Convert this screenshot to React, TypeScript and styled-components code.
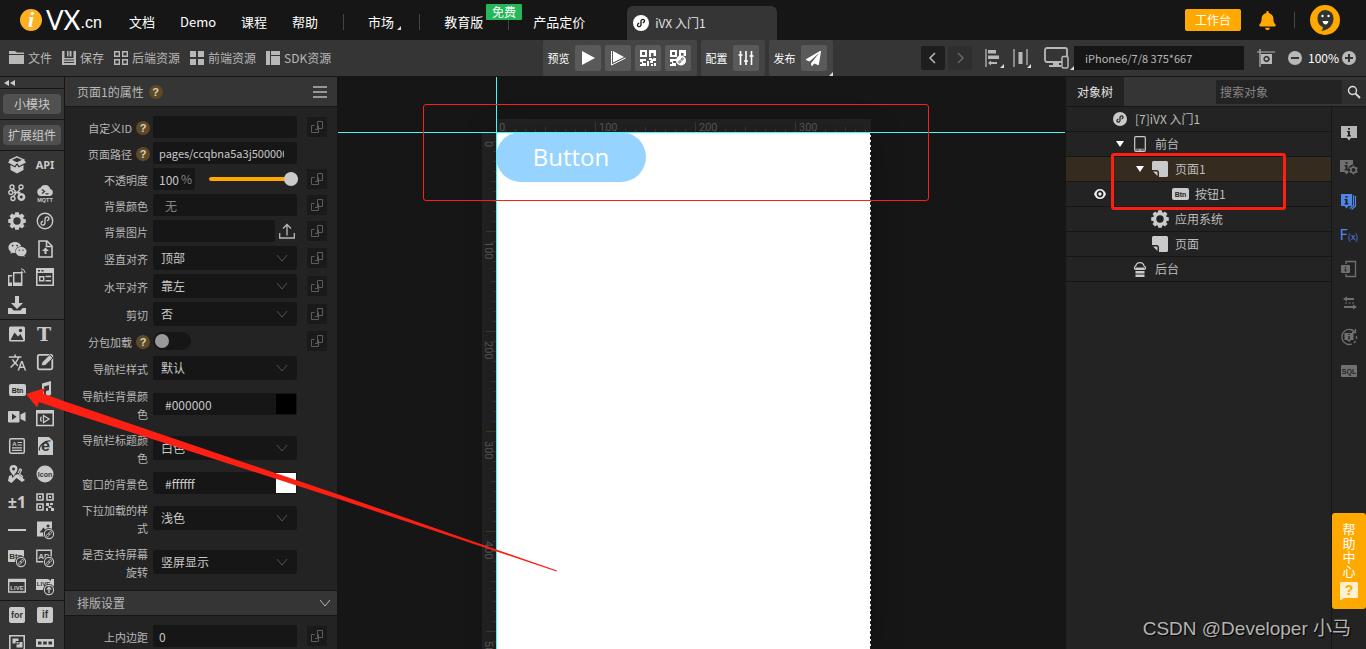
import React from "react";
import styled, { createGlobalStyle } from "styled-components";
import { FaBell, FaWeixin, FaPaperPlane } from "react-icons/fa";
import { MdTranslate } from "react-icons/md";

const color = {
  base: "#161616",
  panel: "#232323",
  bar: "#353535",
  text: "#b8b8b8",
  icon: "#cacaca",
  accent: "#ffa800",
  mark: "#fb2013",
  guide: "#45f6f6",
};

const GlobalStyle = createGlobalStyle`
  *, *::before, *::after { box-sizing: border-box; }
  body {
    margin: 0;
    background: ${color.base};
    color: ${color.text};
    font: 12px/18px "Noto Sans CJK SC", sans-serif;
  }
  button, input, select { font: inherit; color: inherit; border: 0; margin: 0; padding: 0; background: none; outline: 0; }
  button { cursor: pointer; }
  a { color: inherit; text-decoration: none; }
  svg { display: block; flex: none; overflow: visible; }
`;

/* ---------- icons ---------- */

const Svg = ({ size = 18, h, children }: { size?: number; h?: number; children: React.ReactNode }) => (
  <svg width={size} height={h ?? size} viewBox={`0 0 ${size} ${h ?? size}`} fill="currentColor" aria-hidden="true">
    {children}
  </svg>
);

const line = (width = 1.5) => ({ fill: "none", stroke: "currentColor", strokeWidth: width });
const S_PATH =
  "M7 9.2C5.5 9.6 4.8 10.8 5.2 12c.5 1.3 2 1.4 3 .6.6-.5.8-1 .8-1.8V7.2c0-.8.2-1.3.8-1.8 1-.8 2.5-.7 3 .6.4 1.2-.3 2.4-1.8 2.8";

const IconText = ({ x, y, size, fill = "currentColor", serif, children }: {
  x: number; y: number; size: number; fill?: string; serif?: boolean; children: string;
}) => (
  <text
    x={x}
    y={y}
    fill={fill}
    fontSize={size}
    fontWeight="700"
    textAnchor="middle"
    fontFamily={serif ? '"DejaVu Serif", serif' : '"Liberation Sans", sans-serif'}
  >
    {children}
  </text>
);

const LinkBadge = ({ up }: { up?: boolean }) => (
  <g>
    <circle cx="13" cy="13" r="6" fill={color.bar} />
    <circle cx="13" cy="13" r="4.6" fill={color.bar} stroke="currentColor" strokeWidth="1.1" />
    {up ? (
      <path d="M13 16v-5.5M10.8 12.6 13 10.3l2.2 2.3" {...line(1.3)} />
    ) : (
      <g transform="rotate(-45 13 13)" {...line(0.9)}>
        <rect x="9.8" y="12" width="3.6" height="2" rx="1" />
        <rect x="12.6" y="12" width="3.6" height="2" rx="1" />
      </g>
    )}
  </g>
);

const GearIcon = () => (
  <Svg>
    <circle cx="9" cy="9" r="5.3" {...line(3.2)} />
    {[0, 45, 90, 135, 180, 225, 270, 315].map((a) => (
      <path key={a} d="M6.700 3.500 7.200.2h3.600l.5 3.300z" transform={`rotate(${a} 9 9)`} />
    ))}
  </Svg>
);
const BoxIcon = () => (
  <Svg>
    <path d="M9 .8 15.500 3.800 9 7 2.500 3.800z" {...line(1.300)} />
    <path d="M2.200 3.500 9 6.800 6.800 10 0 6.500zM15.800 3.500 9 6.800l2.200 3.200L18 6.500z" />
    <path d="M2.500 9l4.700 2.400L9 9l1.800 2.400L15.500 9v5L9 17.500 2.500 14z" />
  </Svg>
);
const MiniIcon = () => (
  <Svg>
    <circle cx="9" cy="9" r="7.7" {...line(1.4)} />
    <path d={S_PATH} {...line(1.4)} />
  </Svg>
);
const MiniBadge = ({ size, fg, bg }: { size: number; fg: string; bg: string }) => (
  <svg width={size} height={size} viewBox="0 0 18 18" aria-hidden="true">
    <circle cx="9" cy="9" r="9" fill={bg} />
    <path d={S_PATH} fill="none" stroke={fg} strokeWidth="1.6" />
  </svg>
);
const BtnIcon = () => (
  <Svg size={18}>
    <rect x="1" y="3" width="17" height="12" rx="2" />
    <IconText x={9.5} y={11.5} size={7} fill="#232323">Btn</IconText>
  </Svg>
);
const NodesIcon = () => (
  <Svg>
    <path d="M5 4.500 8 8M13 4.500 9.500 8M5 13l3-4M5.500 8.500h7M10 9l2.500 2.500" {...line(1.3)} />
    {[[4, 3], [13, 3], [2.8, 8.5], [5, 14.5]].map(([x, y]) => (
      <circle key={`${x}${y}`} cx={x} cy={y} r="2" {...line(1.4)} />
    ))}
    <path fillRule="evenodd" d="M13.300 9a4 4 0 1 0 .1 0zm0 2.500a1.500 1.500 0 1 1-.1 0z" />
  </Svg>
);
const MqttIcon = () => (
  <Svg>
    <path d="M5 12a4 4 0 0 1-.6-7.900A5.200 5.200 0 0 1 14.200 5 3.600 3.600 0 0 1 14 12z" />
    <path d="m6 5.500 2.500 2L6 9.500M9.500 9.800h3" fill="none" stroke={color.bar} strokeWidth="1.3" />
    <IconText x={9} y={17.5} size={5.5}>MQTT</IconText>
  </Svg>
);
const FileUpIcon = () => (
  <Svg>
    <path d="M3 1h8l5 5v11H3zM10.500 1v5.500H16" {...line(1.6)} />
    <path d="m9.500 7.500 3.500 3.500h-2.500v3h-2v-3H6z" />
  </Svg>
);
const PhonesIcon = () => (
  <Svg>
    <path d="M5.700 4.700h8v12.600h-8z" {...line(1.5)} />
    <path d="M5 14.500h9V18H5zM0 14.500h4V18H0z" />
    <path d="M4 7.700H.700V17" {...line(1.4)} />
    <path d="M13 3a2.500 2.500 0 0 1 2 2M13 .7A5 5 0 0 1 17.300 5" {...line(1)} />
  </Svg>
);
const WindowIcon = () => (
  <Svg>
    <path d="M.8.8h16.400v16.400H.8z" {...line(1.6)} />
    <path d="M0 0h18v5H0z" />
    <path d="M2 2h2v1.500H2zM5.500 2h2v1.500h-2z" fill={color.bar} />
    <path d="M3.700 8.700h4v4h-4zM9.500 8.500H15M9.500 12.700H15" {...line(1.4)} />
  </Svg>
);
const DownloadIcon = () => (
  <Svg><path d="M7 0h4v7h4l-6 6-6-6h4zM0 12h3.500l2 2.500h7l2-2.500H18v6H0z" /></Svg>
);
const ImageIcon = () => (
  <Svg>
    <rect x="1" y="1.500" width="16" height="15" rx="1.500" />
    <circle cx="12.500" cy="5.500" r="1.700" fill={color.bar} />
    <path d="m2.500 15 4-7.500 3.500 4L12.500 9l3 6z" fill={color.bar} />
  </Svg>
);
const EditIcon = () => (
  <Svg>
    <rect x="1.800" y="1.800" width="14.500" height="14.500" rx="1.500" {...line(1.8)} />
    <path d="m5 13 1-3.800 7.500-7.500L17 5l-7.800 7.500z" stroke={color.bar} strokeWidth="1" />
  </Svg>
);
const MusicIcon = () => (
  <Svg>
    <path d="M6 2.500 15 0v12h-2V4L8 5.500V14H6z" />
    <circle cx="5.500" cy="14" r="2.700" /><circle cx="12.500" cy="12" r="2.700" />
  </Svg>
);
const VideoIcon = () => (
  <Svg>
    <rect y="2" width="11.500" height="11.500" rx="1" />
    <path d="m4 4.500 4.500 3.300L4 11z" fill={color.bar} />
    <path d="m17.500 3-5 2.500V10l5 2.500z" />
  </Svg>
);
const PlayWindowIcon = () => (
  <Svg>
    <path d="M.8 2h16.400v14.500H.8z" {...line(1.6)} />
    <path d="M0 1h18v3.500H0z" />
    <path d="M7.500 6.500 13 10l-5.500 3.500z" {...line(1.3)} />
    <path d="M5.500 12.500a4 4 0 0 1 0-5" {...line(1.2)} />
  </Svg>
);
const ArticleIcon = () => (
  <Svg>
    <rect x="1.700" y="1.700" width="14.600" height="14.600" rx="1.500" {...line(1.5)} />
    <path d="M9.500 5.500H14M9.500 8H14M4 10.800h10M4 13.300h10" {...line(1.2)} />
    <IconText x={6.3} y={9} size={6}>A</IconText>
  </Svg>
);
const BrowserIcon = () => (
  <Svg>
    <path d="M2 0h11l4 4v14H2z" />
    <IconText x={9.5} y={14} size={16} fill={color.bar}>e</IconText>
    <path d="M3.500 13.500C2.500 9 8 3.500 14.500 4" fill="none" stroke={color.bar} strokeWidth="1.200" />
  </Svg>
);
const MapIcon = () => (
  <Svg>
    <path fillRule="evenodd" d="M5.500 0a4 4 0 0 1 4 4c0 2.500-2.500 4.500-4 7-1.500-2.500-4-4.500-4-7a4 4 0 0 1 4-4zm0 2.400a1.500 1.500 0 1 0 .1 0z" />
    <path d="m1 11 2.500-1 1 3 2.500-3 3-1 7 6-3 2-5.500-4L3.500 18 0 16z" />
    <path d="m10 8 2-4 1.500 1-2 4 3 2.500-1 2" {...line(1.2)} />
  </Svg>
);
const IconCircle = () => (
  <Svg>
    <circle cx="9" cy="9" r="8.500" />
    <IconText x={9} y={11.5} size={7} fill={color.bar}>Icon</IconText>
  </Svg>
);
const QrIcon = () => (
  <Svg>
    <path d="M1 1h6v6H1zM11 1h6v6h-6zM1 11h6v6H1z" {...line(1.6)} />
    <path d="M3 3h2v2H3zM13 3h2v2h-2zM3 13h2v2H3zM10 10h3v3h-3zM14 10h3v2h-3zM12.500 13h3v2h-3zM10 15h2v3h-2zM15 15h3v3h-3z" />
  </Svg>
);
const DashIcon = () => <Svg><path d="M0 8h18v2H0z" /></Svg>;
const ImageLinkIcon = () => (
  <Svg>
    <path fillRule="evenodd" d="M1 .5h15v15H1zm2.500 11h8L7.500 6.500zM12 3.500a1.500 1.500 0 1 0 .1 0z" />
    <LinkBadge />
  </Svg>
);
const BtnLinkIcon = () => (
  <Svg>
    <rect y="1" width="16" height="12" rx="1" />
    <IconText x={8} y={9.5} size={8} fill={color.bar}>Btn</IconText>
    <LinkBadge />
  </Svg>
);
const AdLinkIcon = () => (
  <Svg>
    <path d="M.8 1.300h14.400v11.400H.8z" {...line(1.4)} />
    <IconText x={8} y={9.5} size={8}>AD</IconText>
    <LinkBadge />
  </Svg>
);
const LiveIcon = () => (
  <Svg>
    <path d="M.7 2.500h16.600V15H.7z" {...line(1.4)} />
    <path d="M0 2h18v3H0z" />
    <IconText x={9} y={12.5} size={6}>LIVE</IconText>
  </Svg>
);
const LiveUpIcon = () => (
  <Svg>
    <path d="M0 2h12l3 2V2h3v11H0z" />
    <IconText x={7.5} y={9} size={6} fill={color.bar}>LIVE</IconText>
    <LinkBadge up />
  </Svg>
);
const WordIcon = ({ word }: { word: string }) => (
  <Svg>
    <rect x="1" y="1" width="16" height="16" rx="2" />
    <IconText x={9} y={12} size={word === "if" ? 10 : 9} fill={color.bar}>{word}</IconText>
  </Svg>
);
const GroupIcon = () => (
  <Svg>
    <path d="M1.800 1.800h14.400v15H1.800z" {...line(1.6)} />
    <path d="M4 4h7v6H4zM8 7.500h7V14H8z" stroke={color.bar} strokeWidth="1" />
  </Svg>
);
const CellsIcon = () => (
  <Svg><path d="M0 5h18v8H0z" /><path d="M2 7.500h3.500v3H2zM7.200 7.500h3.500v3H7.200zM12.500 7.500H16v3h-3.500z" fill={color.bar} /></Svg>
);
const LetterT = () => <Svg><IconText x={8} y={15.5} size={19} serif>T</IconText></Svg>;

const FolderIcon = () => <Svg size={15} h={14}><path d="M0 0h6l2 1.500h7V3H0zM0 4h15v9H0z" /></Svg>;
const SaveIcon = () => <Svg size={14}><path d="M0 0h2.500v7h9V0H14v14H0zM5 0h1.500v5.500H5zM7.500 0h2v5.500h-2z" /><path d="M2 9h10M2 11.500h10" stroke={color.bar} /></Svg>;
const GridOutline = () => <Svg size={14}><path d="M.7.700h4.600v4.600H.7zM8.700.700h4.600v4.600H8.700zM.7 8.700h4.600v4.600H.7zM8.700 8.700h4.600v4.600H8.700z" {...line(1.4)} /></Svg>;
const GridSolid = () => <Svg size={14}><path d="M0 0h6v6H0zM8 0h6v6H8zM0 8h6v6H0zM8 8h6v6H8z" /></Svg>;
const SdkIcon = () => <Svg size={14}><path d="M0 0h4v14H0zM5 0h9v4H5zM5 5h9v9H5z" /></Svg>;
const PlayIcon = () => <Svg size={16}><path d="m2 1 13 7-13 7z" /></Svg>;
const PlayStackIcon = () => <Svg size={16}><path d="m3 1 11 6L3 12.500z" /><path d="M1.500 1v14l14-7" {...line(1)} /></Svg>;
const QrPreview = ({ mini }: { mini?: boolean }) => (
  <Svg size={16}>
    <path d="M1 1h5v5H1z" {...line(2)} />
    <path d="M9 0h7v6h-2.500V3H11v4H9zM0 9h6v2H3v2h3v3H0v-2h2v-2H0z" />
    {mini ? (
      <>
        <circle cx="11" cy="10.500" r="5" />
        <path d="M10 10.500c-2 1-1.500 3 0 2.300 1.200-.6.700-1.600 1-2.300s-.2-1.700 1-2.300c1.500-.7 2 1.300 0 2.300" fill="none" stroke="#555" />
      </>
    ) : (
      <path d="M9 8h3v2H9zM14 8h2v3h-3v2h-3v-2M7 11h2v5H7zM11 14h2v2h-2zM14 13h2v3h-2z" />
    )}
  </Svg>
);
const SlidersIcon = () => (
  <Svg size={16}><path d="M2.500 1v14M8 1v14M13.500 1v14M.5 5h4M6 11h4M11.500 6h4" {...line(1.6)} /></Svg>
);
const AlignIcon = () => (
  <Svg size={18}>
    <path d="M1 0v18" {...line(1.3)} />
    <path d="M3 1h8v3.500H3zM3 6.500h11V10H3zM3 14l3-2.500V13h6v2H6v1.500z" />
  </Svg>
);
const SpreadIcon = () => <Svg size={16} h={18}><path d="M1 0v18M14 0v16" {...line(1.3)} /><path d="M5.500 3h4v12h-4z" /></Svg>;
const DevicesIcon = () => (
  <Svg size={25} h={22}>
    <rect x="1" y="1" width="22" height="14" rx="2" {...line(1.8)} />
    <path d="M9 15h6v3H9zM5 18h12v2H5z" />
    <rect x="18" y="9.500" width="6" height="11.500" rx="1.500" fill={color.bar} stroke="currentColor" strokeWidth="1.5" />
  </Svg>
);
const CaptureIcon = () => (
  <Svg size={18}>
    <path d="M0 3h18M3 0v18" {...line(1.2)} />
    <path fillRule="evenodd" d="M4 5h11v10H4zm5.500 1.800a3.200 3.200 0 1 0 .1 0zm0 1.700a1.500 1.500 0 1 1-.1 0z" />
  </Svg>
);
const ZoomIcon = ({ plus }: { plus?: boolean }) => (
  <Svg size={14}>
    <circle cx="7" cy="7" r="7" />
    <path d={plus ? "M3 7h8M7 3v8" : "M3 7h8"} stroke={color.bar} strokeWidth="2" />
  </Svg>
);
const Chevron = ({ d }: { d: "left" | "right" | "down" }) => {
  const path = { left: "M8 1 3 6l5 5", right: "M4 1l5 5-5 5", down: "M1 3l5 6 5-6" }[d];
  return <Svg size={12}><path d={path} {...line(d === "down" ? 1 : 1.5)} /></Svg>;
};
const CopyIcon = () => (
  <Svg size={14}><path d="M4.500 5.500h-3v7h7v-7M8.500 8.500h4v-7h-5v8H5" {...line(1)} /></Svg>
);
const UploadIcon = () => <Svg size={16}><path d="M.7 10v5h14.600v-5M8 12.500V1.500M4 5.500l4-4 4 4" {...line(1.3)} /></Svg>;
const MenuIcon = () => <Svg size={14} h={12}><path d="M0 1h14M0 6h14M0 11h14" {...line(1.3)} /></Svg>;
const SearchIcon = () => <Svg size={14}><circle cx="5.500" cy="5.500" r="4" {...line(1.4)} /><path d="m8.500 8.500 4.500 4.500" {...line(1.8)} /></Svg>;
const PhoneIcon = () => <Svg size={14} h={16}><rect x="1.700" y=".7" width="10.600" height="14.600" rx="1" {...line(1.2)} /><path d="M2 12.500h10V15H2z" fill="#777" /><path d="M6 13.500h2v1H6z" /></Svg>;
const PageIcon = () => <Svg size={16}><path d="M0 1.500Q0 0 1.500 0h13Q16 0 16 1.500v13q0 1.500-1.500 1.500H7V11.500Q7 9 4.500 9H0z" /><path d="M1 10.500h3.500q1 0 1 1V15z" /></Svg>;
const ServerIcon = () => (
  <Svg size={14} h={15}>
    <path d="M3 7.500H2.500A1.900 1.900 0 0 1 2.700 4a4.300 4.300 0 0 1 8.400 0 1.900 1.900 0 0 1 .4 3.500H11" {...line(1.2)} />
    <path d="M2.500 5.500h9v2.500h-9zM2.500 9h9v2.500h-9zM2.500 12.500h9V15h-9z" />
  </Svg>
);
const EyeIcon = () => (
  <Svg size={12} h={10}><path fillRule="evenodd" d="M6 0c3 0 5 2 6 5-1 3-3 5-6 5S1 8 0 5c1-3 3-5 6-5zm0 1.600a3.400 3.400 0 1 0 .1 0zm0 1.700a1.700 1.700 0 1 1-.1 0z" /></Svg>
);
const Bubble = ({ x = 1, w = 16 }: { x?: number; w?: number }) => (
  <>
    <path d={`M${x} 2h${w}v12h-${w / 2 - 2}l-2 2.500-2-2.500h-${w / 2 - 2}z`} />
    <path
      d="M-1 4h2v1.800h-2zM-2 7h3v4.200h1v1.300h-4v-1.300h1V8.300h-1z"
      transform={`translate(${x + w / 2} 0)`}
      fill={color.panel}
    />
  </>
);
const InfoGear = () => (
  <Svg>
    <Bubble x={0} w={13} />
    <circle cx="13.500" cy="12" r="5.500" fill={color.panel} />
    <circle cx="13.500" cy="12" r="2.700" {...line(1.6)} />
    {[0, 60, 120, 180, 240, 300].map((a) => <path key={a} d="M12.700 7.500h1.600v2h-1.600z" transform={`rotate(${a} 13.500 12)`} />)}
  </Svg>
);
const InfoStack = () => (
  <Svg><Bubble x={1} w={11} /><path d="M13.500 3v10.500l-4 3M15.500 4v10l-4 3.500" {...line(1.2)} /></Svg>
);
const InfoDoor = () => <Svg><path d="M6 4V1.500h9.500v15H6V14" {...line(1.3)} /><rect x="1" y="5" width="9" height="8" rx="1" /><path d="M5.500 6.500v1M5.500 8.500v3" stroke={color.panel} strokeWidth="1.500" /></Svg>;
const SwapIcon = () => <Svg><path d="M5 4h9v2H7v1.500L3 5l4-2.500V4zM13 10.500l4 2.500-4 2.500V14H4v-2h9zM5 8.500h2v1H5zM8.500 8.500h2v1h-2zM12 8.500h2v1h-2z" /></Svg>;
const InfoCycle = () => (
  <Svg>
    <path d="M14.500 3.500A7.500 7.500 0 1 0 12 16M16.500 8v3M15.500 13l-1.500 2M12 4.500h3.500V1" {...line(1.3)} />
    <path d="M4.500 5h9v7h-2.500L9 14l-2-2H4.500z" /><path d="M9 6v1M9 8v3.500" stroke={color.panel} strokeWidth="1.500" />
  </Svg>
);
const SqlIcon = () => <Svg><rect x="1" y="3" width="16" height="12" rx="1" /><IconText x={9} y={11.8} size={7} fill={color.panel}>SQL</IconText></Svg>;
const ChatHelp = () => (
  <Svg size={18} h={19}>
    <path d="M0 1.500Q0 0 1.500 0h15Q18 0 18 1.500v13q0 1.500-1.500 1.500H4l-4 2.500z" fill="#fff0cf" />
    <IconText x={9} y={13} size={14} fill={color.accent}>?</IconText>
  </Svg>
);

/* ---------- top navigation ---------- */

const Shell = styled.div`
  position: relative;
  height: 100vh;
  display: flex;
  flex-direction: column;
  overflow: hidden;
`;
const TopBar = styled.header`
  flex: none;
  height: 40px;
  display: flex;
  align-items: center;
  padding: 0 26px 0 20px;
  color: #fff;
`;
const Logo = styled.a`
  display: flex;
  align-items: center;
  width: 109px;
`;
const LogoMain = styled.span`
  margin-left: 4px;
  font: 400 26px/26px Lato, sans-serif;
`;
const LogoDomain = styled.span`
  padding-top: 5px;
  font: 16px/20px "Liberation Sans", sans-serif;
`;
const Menu = styled.nav`
  display: flex;
  align-items: center;
  gap: 25px;
  height: 40px;
  padding-top: 3px;
  font-size: 13px;
`;
const MenuLink = styled.a`
  position: relative;
  white-space: nowrap;
`;
const Corner = styled.span<{ $right: number; $bottom: number }>`
  position: absolute;
  right: ${(p) => p.$right}px;
  bottom: ${(p) => p.$bottom}px;
  border: 2px solid transparent;
  border-right-color: #ddd;
  border-bottom-color: #ddd;
`;
const Divider = styled.span`
  flex: none;
  width: 1px;
  height: 16px;
  margin-right: -1px;
  background: #444;
`;
const FreeBadge = styled.span`
  position: absolute;
  left: 42px;
  bottom: 11px;
  z-index: 1;
  width: 36px;
  border-radius: 1px;
  background: #27b65a;
  font-size: 12px;
  line-height: 16px;
  text-align: center;
`;
const ProjectTab = styled.a`
  align-self: flex-end;
  display: flex;
  align-items: center;
  gap: 6px;
  width: 150px;
  height: 34px;
  margin-left: 42px;
  padding-left: 6px;
  border-radius: 6px 6px 0 0;
  background: ${color.bar};
  color: #e4e4e4;
`;
const Account = styled.div`
  display: flex;
  align-items: center;
  margin-left: auto;
`;
const WorkspaceButton = styled.button`
  width: 56px;
  height: 22px;
  border-radius: 2px;
  background: ${color.accent};
  color: #fff;
`;
const BellButton = styled.button`
  margin: 0 17px;
  color: ${color.accent};
`;
const Avatar = styled.a`
  margin-left: 16px;
`;

/* ---------- toolbar ---------- */

const Toolbar = styled.div`
  flex: none;
  display: grid;
  grid-template-columns: 1fr auto 1fr;
  align-items: center;
  height: 36px;
  padding-left: 9px;
  background: ${color.bar};
`;
const ToolSection = styled.div<{ $end?: boolean }>`
  display: flex;
  align-items: center;
  justify-content: ${(p) => (p.$end ? "flex-end" : "flex-start")};
  gap: ${(p) => (p.$end ? 0 : 10)}px;
  padding-right: ${(p) => (p.$end ? 10 : 0)}px;
`;
const FileButton = styled.button`
  display: flex;
  align-items: center;
  gap: 4px;
  white-space: nowrap;
`;
const Groups = styled.div`
  display: flex;
  gap: 4px;
`;
const Group = styled.div`
  position: relative;
  display: flex;
  align-items: center;
  gap: 4px;
  height: 36px;
  padding: 0 6px 0 5px;
  border-radius: 2px;
  background: #444;
  color: #fff;
  font-size: 11px;
`;
const GroupName = styled.span`
  margin-right: 1px;
`;
const GroupButton = styled.button`
  display: grid;
  place-items: center;
  width: 26px;
  height: 26px;
  border-radius: 2px;
  background: #5a5a5a;
  color: #fff;
`;
const StepButton = styled.button`
  display: grid;
  place-items: center;
  width: 24px;
  height: 24px;
  margin-right: 3px;
  border-radius: 2px;
  background: #1e1e1e;
  color: #bbb;
  &:disabled { background: #2e2e2e; color: #666; }
`;
const FlatButton = styled.button<{ $left?: number }>`
  position: relative;
  margin-left: ${(p) => p.$left ?? 0}px;
`;
const DeviceSelect = styled.select`
  appearance: none;
  width: 170px;
  height: 24px;
  margin: 0 13px 0 5px;
  padding-left: 11px;
  background: ${color.base};
  font-size: 11px;
`;
const ZoomValue = styled.output`
  width: 28px;
  margin: 0 6px;
  color: #fff;
  white-space: nowrap;
`;

/* ---------- workspace ---------- */

const Workspace = styled.main`
  flex: 1;
  min-height: 0;
  display: grid;
  grid-template-columns: 64px 272px minmax(0, 1fr) 300px;
  gap: 1px;
  padding-top: 1px;
`;

const Rail = styled.aside`
  overflow: hidden;
  background: ${color.bar};
  color: ${color.icon};
`;
const RailBlock = styled.div`
  height: 31px;
  padding: 5px 3px;
  border-bottom: 1px solid ${color.base};
`;
const CollapseButton = styled.button`
  display: flex;
  align-items: center;
  width: 100%;
  height: 12px;
  padding-left: 4px;
  border-bottom: 1px solid ${color.base};
`;
const ModuleButton = styled.button`
  width: 58px;
  height: 20px;
  border-radius: 4px;
  background: #505050;
  white-space: nowrap;
`;
const WidgetGrid = styled.div`
  display: grid;
  grid-template-columns: 28px 28px;
  grid-auto-rows: 28px;
  padding: 0 3px;
  border-bottom: 1px solid ${color.base};
`;
const WidgetButton = styled.button`
  display: grid;
  place-items: center;
  font: 700 11px/18px "Noto Sans", sans-serif;
`;
const WidgetSign = styled.span`
  font-size: 16px;
`;

/* ---------- properties ---------- */

const Properties = styled.section`
  overflow: hidden;
  background: ${color.panel};
`;
const PanelHeader = styled.header<{ $height: number }>`
  display: flex;
  align-items: center;
  gap: 5px;
  height: ${(p) => p.$height}px;
  padding: 0 6px 0 12px;
  background: ${color.bar};
  box-shadow: 0 1px ${color.base}, 0 -1px ${color.base};
`;
const HeaderButton = styled.button<{ $right: number }>`
  margin: 0 ${(p) => p.$right}px 0 auto;
`;
const Help = styled.button`
  flex: none;
  width: 14px;
  height: 14px;
  border-radius: 50%;
  background: #5e4a25;
  color: #d8d0c0;
  font: 700 11px/14px "Liberation Sans", sans-serif;
`;
const Rows = styled.div`
  display: flex;
  flex-direction: column;
  gap: 4px;
  padding: 10px 10px 9px 0;
`;
const Row = styled.div<{ $height: number }>`
  display: grid;
  grid-template-columns: 88px 144px 20px;
  justify-content: start;
  align-items: center;
  height: ${(p) => p.$height}px;
`;
const RowLabel = styled.div<{ $help?: boolean }>`
  display: flex;
  align-items: center;
  justify-content: flex-end;
  gap: 4px;
  padding: 1px ${(p) => (p.$help ? 3 : 5)}px 0 14px;
  font-size: 11px;
  text-align: right;
`;
const Control = styled.div`
  display: flex;
  align-items: center;
`;
const Field = styled.div<{ $width: number; $pad?: number }>`
  display: flex;
  align-items: center;
  width: ${(p) => p.$width}px;
  height: 22px;
  padding: 0 1px 0 ${(p) => p.$pad ?? 6}px;
  border-radius: 2px;
  background: ${color.base};
`;
const TextInput = styled.input<{ $long?: boolean }>`
  flex: 1;
  min-width: 0;
  height: 22px;
  margin-right: ${(p) => (p.$long ? 12 : 0)}px;
  color: #c8c8c8;
  font-size: ${(p) => (p.$long ? 11 : 12)}px;
  &::placeholder { color: #858585; opacity: 1; }
`;
const Unit = styled.span`
  padding-right: 2px;
  color: #858585;
`;
const Swatch = styled.input`
  appearance: none;
  width: 20px;
  height: 20px;
  &::-webkit-color-swatch-wrapper { padding: 0; }
  &::-webkit-color-swatch { border: 0; }
`;
const SelectBox = styled.div`
  position: relative;
  width: 144px;
  height: 24px;
  color: #555;
`;
const Select = styled.select`
  appearance: none;
  width: 100%;
  height: 24px;
  padding-left: 8px;
  border-radius: 2px;
  background: ${color.base};
  color: #c8c8c8;
`;
const SelectArrow = styled.span`
  position: absolute;
  right: 9px;
  top: 6px;
  pointer-events: none;
`;
const Range = styled.input`
  appearance: none;
  width: 89px;
  height: 14px;
  margin-left: 14px;
  &::-webkit-slider-runnable-track { height: 4px; border-radius: 2px; background: ${color.accent}; }
  &::-webkit-slider-thumb { appearance: none; width: 14px; height: 14px; margin-top: -5px; border-radius: 50%; background: #cacaca; }
`;
const Switch = styled.input`
  appearance: none;
  display: flex;
  align-items: center;
  width: 38px;
  height: 18px;
  padding-left: 2px;
  border-radius: 9px;
  background: ${color.base};
  &::before { content: ""; width: 14px; height: 14px; border-radius: 50%; background: #999; }
`;
const UploadButton = styled.button`
  margin-left: 4px;
`;
const BindButton = styled.button`
  display: grid;
  place-items: center;
  width: 20px;
  height: 20px;
  margin-left: 10px;
  background: #1a1a1a;
  color: #5c5c5c;
`;

/* ---------- canvas ---------- */

const Canvas = styled.section`
  position: relative;
  overflow: hidden;
  padding: 42px 0 0 144px;
  display: grid;
  grid-template-columns: 14px 375px;
  grid-template-rows: 13px minmax(0, 1fr);
`;
const RulerX = styled.div`
  grid-column: 2;
  background: ${color.panel};
`;
const RulerY = styled.div`
  background: ${color.panel};
`;
const Artboard = styled.div`
  background: #fff;
  border-right: 1px dashed #222;
  box-shadow: 0 0 30px #0004;
`;
const SampleButton = styled.button`
  display: block;
  width: 150px;
  height: 50px;
  border-radius: 25px;
  background: #97d3ff;
  color: #fff;
  font: 24px/50px "Open Sans", sans-serif;
`;
const GuideX = styled.i`
  position: absolute;
  top: 55px;
  left: -1px;
  right: 0;
  height: 1px;
  background: ${color.guide};
`;
const GuideY = styled.i`
  position: absolute;
  left: 158px;
  top: 0;
  bottom: 0;
  width: 1px;
  background: ${color.guide};
`;
const Mark = styled.i<{ $x: number; $y: number; $w: number; $h: number; $line: number }>`
  position: absolute;
  left: ${(p) => p.$x}px;
  top: ${(p) => p.$y}px;
  width: ${(p) => p.$w}px;
  height: ${(p) => p.$h}px;
  border: ${(p) => p.$line}px solid ${color.mark};
  border-radius: 3px;
  pointer-events: none;
`;

const Ruler = ({ vertical }: { vertical?: boolean }) => {
  const length = vertical ? 600 : 375;
  const depth = vertical ? 14 : 13;
  const ticks = Array.from({ length: Math.floor(length / 10) }, (_, i) => (i + 1) * 10);
  return (
    <svg
      width={vertical ? depth : length}
      height={vertical ? length : depth}
      fontFamily="Roboto, sans-serif"
      fontSize="11"
      fill="#5a5a5a"
      aria-hidden="true"
    >
      {ticks.map((t) => {
        const size = t % 100 === 0 ? 10 : t % 50 === 0 ? 5 : 3;
        const fill = t % 100 === 0 ? "#46391f" : "#3a3a3a";
        return vertical ? (
          <rect key={t} x={depth - size} y={t - 1} width={size} height="1" fill={fill} />
        ) : (
          <rect key={t} x={t - 1} y={depth - size} width="1" height={size} fill={fill} />
        );
      })}
      {Array.from({ length: Math.ceil(length / 100) }, (_, i) => i * 100).map((n) =>
        vertical ? (
          <text key={n} transform={`translate(3 ${n + 9}) rotate(90)`}>{n}</text>
        ) : (
          <text key={n} x={n + 3} y="12">{n}</text>
        )
      )}
    </svg>
  );
};

/* ---------- object tree ---------- */

const ObjectPanel = styled.aside`
  display: flex;
  flex-direction: column;
  background: ${color.panel};
`;
const TreeHeader = styled.header`
  display: flex;
  align-items: center;
  height: 29px;
  background: ${color.bar};
`;
const TreeTab = styled.button`
  width: 58px;
  height: 29px;
  background: ${color.panel};
  color: #e0e0e0;
`;
const SearchInput = styled.input`
  width: 126px;
  height: 24px;
  margin-left: auto;
  padding-left: 4px;
  background: ${color.panel};
  &::placeholder { color: #858585; opacity: 1; }
`;
const SearchButton = styled.button`
  display: grid;
  place-items: center;
  width: 24px;
  height: 24px;
  background: #2e2e2e;
  color: #ddd;
`;
const TreeBody = styled.div`
  flex: 1;
  display: flex;
  border-top: 1px solid ${color.base};
`;
const Tree = styled.ul`
  position: relative;
  flex: 1;
  margin: 0;
  padding: 0;
  list-style: none;
`;
const TreeRow = styled.li<{ $active?: boolean }>`
  display: flex;
  align-items: center;
  height: 25px;
  padding-left: 24px;
  border-bottom: 1px solid ${color.base};
  background: ${(p) => (p.$active ? "#352b1f" : "transparent")};
  color: ${color.icon};
`;
const NodeName = styled.span`
  color: #bcbcbc;
`;
const EyeSlot = styled.span`
  display: grid;
  place-items: center;
  width: 20px;
  color: #eee;
`;
const Toggle = styled.button<{ $depth: number }>`
  display: flex;
  justify-content: flex-end;
  width: ${(p) => p.$depth * 20}px;
  padding-right: 6px;
  color: #fff;
`;
const IconSlot = styled.span`
  display: grid;
  place-items: center;
  width: 20px;
  margin-right: 5px;
`;
const Tools = styled.div`
  display: flex;
  flex-direction: column;
  width: 35px;
  padding-top: 9px;
  border-left: 1px solid ${color.base};
`;
const ToolButton = styled.button<{ $tone: string }>`
  display: grid;
  place-items: center;
  height: 34px;
  color: ${(p) => p.$tone};
  font: 15px/18px "Noto Sans CJK SC", sans-serif;
`;
const Small = styled.small`
  font-size: 9px;
`;
const HelpCenter = styled.a`
  position: absolute;
  right: 0;
  bottom: 40px;
  display: flex;
  flex-direction: column;
  align-items: center;
  gap: 4px;
  width: 34px;
  height: 96px;
  padding-top: 9px;
  border-radius: 3px;
  background: ${color.accent};
  color: #fff;
  font-size: 13px;
  line-height: 14px;
`;
const HelpText = styled.span`
  width: 14px;
  text-align: center;
`;
const Watermark = styled.p`
  position: absolute;
  right: 15px;
  bottom: 8px;
  margin: 0;
  color: #b4b4b4;
  font: 19px/24px "Liberation Sans", "Noto Sans CJK SC", sans-serif;
  text-shadow: 1px 1px 1px #000;
  pointer-events: none;
`;
const ArrowLayer = styled.svg`
  position: absolute;
  left: 24px;
  top: 384px;
  pointer-events: none;
`;

/* ---------- data ---------- */

const systemWidgets: [string, React.ReactNode][] = [
  ["组件包", <BoxIcon />], ["接口", "API"],
  ["节点", <NodesIcon />], ["消息", <MqttIcon />],
  ["系统", <GearIcon />], ["小程序", <MiniIcon />],
  ["微信", <FaWeixin size={19} />], ["文件", <FileUpIcon />],
  ["设备", <PhonesIcon />], ["窗口", <WindowIcon />],
  ["下载", <DownloadIcon />],
];
const uiWidgets: [string, React.ReactNode][] = [
  ["图片", <ImageIcon />], ["文本", <LetterT />],
  ["多语言", <MdTranslate size={19} />], ["输入框", <EditIcon />],
  ["按钮", <BtnIcon />], ["音频", <MusicIcon />],
  ["视频", <VideoIcon />], ["播放器", <PlayWindowIcon />],
  ["富文本", <ArticleIcon />], ["网页", <BrowserIcon />],
  ["地图", <MapIcon />], ["图标", <IconCircle />],
  ["计数", <WidgetSign>±1</WidgetSign>], ["二维码", <QrIcon />],
  ["横线", <DashIcon />], ["图片链接", <ImageLinkIcon />],
  ["按钮链接", <BtnLinkIcon />], ["广告", <AdLinkIcon />],
  ["直播", <LiveIcon />], ["推流", <LiveUpIcon />],
];
const logicWidgets: [string, React.ReactNode][] = [
  ["循环", <WordIcon word="for" />], ["条件", <WordIcon word="if" />],
  ["组合", <GroupIcon />], ["表格", <CellsIcon />],
];

const Widgets = ({ items }: { items: [string, React.ReactNode][] }) => (
  <WidgetGrid>
    {items.map(([name, icon]) => <WidgetButton key={name} aria-label={name}>{icon}</WidgetButton>)}
  </WidgetGrid>
);

type PropProps = {
  id: string; label: string; height?: number; help?: boolean; bind?: boolean; children: React.ReactNode;
};
const Prop = ({ id, label, height = 22, help, bind, children }: PropProps) => (
  <Row $height={height}>
    <RowLabel $help={help}>
      <label htmlFor={id}>{label}</label>
      {help && <Help aria-label={`${label}说明`}>?</Help>}
    </RowLabel>
    <Control>{children}</Control>
    {bind && <BindButton aria-label={`绑定${label}`}><CopyIcon /></BindButton>}
  </Row>
);
const SelectProp = ({ value, ...rest }: Omit<PropProps, "children"> & { value: string }) => (
  <Prop height={24} {...rest}>
    <SelectBox>
      <Select id={rest.id}><option>{value}</option></Select>
      <SelectArrow><Chevron d="down" /></SelectArrow>
    </SelectBox>
  </Prop>
);
const ColorProp = ({ value, ...rest }: Omit<PropProps, "children"> & { value: string }) => (
  <Prop {...rest}>
    <Field $width={144} $pad={12}>
      <TextInput id={rest.id} defaultValue={value} />
      <Swatch type="color" defaultValue={value} aria-label={rest.label} />
    </Field>
  </Prop>
);

const nodes: { name: string; depth: number; icon: React.ReactNode; open?: boolean; active?: boolean; eye?: boolean }[] = [
  { name: "[7]iVX 入门1", depth: 0, icon: <MiniBadge size={14} fg="#232323" bg={color.icon} /> },
  { name: "前台", depth: 1, icon: <PhoneIcon />, open: true },
  { name: "页面1", depth: 2, icon: <PageIcon />, open: true, active: true },
  { name: "按钮1", depth: 3, icon: <BtnIcon />, eye: true },
  { name: "应用系统", depth: 2, icon: <GearIcon /> },
  { name: "页面", depth: 2, icon: <PageIcon /> },
  { name: "后台", depth: 1, icon: <ServerIcon /> },
];

export default function App() {
  return (
    <Shell>
      <GlobalStyle />
      <TopBar>
        <Logo href="#" aria-label="iVX.cn">
          <svg width="22" height="22" viewBox="0 0 22 22">
            <circle cx="11" cy="11" r="11" fill="#fdb022" />
            <text x="11" y="18" textAnchor="middle" fill="#fff" fontSize="22" fontStyle="italic" fontWeight="700" fontFamily='"Liberation Serif", serif'>i</text>
          </svg>
          <LogoMain>VX</LogoMain>
          <LogoDomain>.cn</LogoDomain>
        </Logo>
        <Menu>
          <MenuLink href="#">文档</MenuLink>
          <MenuLink href="#">Demo</MenuLink>
          <MenuLink href="#">课程</MenuLink>
          <MenuLink href="#">帮助</MenuLink>
          <Divider />
          <MenuLink href="#">市场<Corner $right={-7} $bottom={1} /></MenuLink>
          <Divider />
          <MenuLink href="#">教育版<FreeBadge>免费</FreeBadge></MenuLink>
          <Divider />
          <MenuLink href="#">产品定价</MenuLink>
        </Menu>
        <ProjectTab href="#">
          <MiniBadge size={16} fg="#222" bg="#fff" />
          iVX 入门1
        </ProjectTab>
        <Account>
          <WorkspaceButton>工作台</WorkspaceButton>
          <BellButton aria-label="通知"><FaBell size={19} /></BellButton>
          <Divider />
          <Avatar href="#" aria-label="账号">
            <svg width="30" height="30" viewBox="0 0 30 30">
              <circle cx="15" cy="15" r="15" fill={color.accent} />
              <path d="M15.500 5a8 8 0 0 1 8 8.500c0 6-4 11.500-12.500 12.500 1.500-1 2-2.500 1.800-4C9.500 21 7.500 17.500 7.500 13a8 8 0 0 1 8-8z" fill="#333" />
              <circle cx="12.500" cy="11" r="1.200" fill="#fff" /><circle cx="18.500" cy="11" r="1.200" fill="#fff" />
              <path d="M12.500 16h6q-1 3.500-3 3.500t-3-3.500z" fill="#fff" />
            </svg>
          </Avatar>
        </Account>
      </TopBar>

      <Toolbar>
        <ToolSection>
          <FileButton><FolderIcon />文件</FileButton>
          <FileButton><SaveIcon />保存</FileButton>
          <FileButton><GridOutline />后端资源</FileButton>
          <FileButton><GridSolid />前端资源</FileButton>
          <FileButton><SdkIcon />SDK资源</FileButton>
        </ToolSection>
        <Groups>
          <Group>
            <GroupName>预览</GroupName>
            <GroupButton aria-label="播放"><PlayIcon /></GroupButton>
            <GroupButton aria-label="分段播放"><PlayStackIcon /></GroupButton>
            <GroupButton aria-label="扫码预览"><QrPreview /></GroupButton>
            <GroupButton aria-label="小程序预览"><QrPreview mini /></GroupButton>
          </Group>
          <Group>
            <GroupName>配置</GroupName>
            <GroupButton aria-label="配置"><SlidersIcon /></GroupButton>
          </Group>
          <Group>
            <GroupName>发布</GroupName>
            <GroupButton aria-label="发布"><FaPaperPlane size={15} /></GroupButton>
            <Corner $right={0} $bottom={0} />
          </Group>
        </Groups>
        <ToolSection $end>
          <StepButton aria-label="上一步"><Chevron d="left" /></StepButton>
          <StepButton aria-label="下一步" disabled><Chevron d="right" /></StepButton>
          <FlatButton $left={10} aria-label="对齐"><AlignIcon /><Corner $right={-1} $bottom={-1} /></FlatButton>
          <FlatButton $left={10} aria-label="分布"><SpreadIcon /><Corner $right={-2} $bottom={-1} /></FlatButton>
          <FlatButton $left={15} aria-label="设备"><DevicesIcon /><Corner $right={-5} $bottom={-1} /></FlatButton>
          <DeviceSelect aria-label="屏幕尺寸"><option>iPhone6/7/8 375*667</option></DeviceSelect>
          <FlatButton aria-label="截图"><CaptureIcon /></FlatButton>
          <FlatButton $left={13} aria-label="缩小"><ZoomIcon /></FlatButton>
          <ZoomValue>100%</ZoomValue>
          <FlatButton aria-label="放大"><ZoomIcon plus /></FlatButton>
        </ToolSection>
      </Toolbar>

      <Workspace>
        <Rail>
          <CollapseButton aria-label="收起">
            <Svg size={12} h={6}><path d="M5 0v6L0 3zM11 0v6L6 3z" /></Svg>
          </CollapseButton>
          <RailBlock><ModuleButton>小模块</ModuleButton></RailBlock>
          <RailBlock><ModuleButton>扩展组件</ModuleButton></RailBlock>
          <Widgets items={systemWidgets} />
          <Widgets items={uiWidgets} />
          <Widgets items={logicWidgets} />
        </Rail>

        <Properties>
          <PanelHeader $height={29}>
            页面1的属性
            <Help aria-label="属性说明">?</Help>
            <HeaderButton $right={4} aria-label="菜单"><MenuIcon /></HeaderButton>
          </PanelHeader>
          <Rows>
            <Prop id="cid" label="自定义ID" help bind>
              <Field $width={144}><TextInput id="cid" /></Field>
            </Prop>
            <Prop id="path" label="页面路径" help>
              <Field $width={144}><TextInput id="path" $long defaultValue="pages/ccqbna5a3j500000" /></Field>
            </Prop>
            <Prop id="opacity" label="不透明度" bind>
              <Field $width={42}><TextInput id="opacity" defaultValue="100" /><Unit>%</Unit></Field>
              <Range type="range" defaultValue={100} aria-label="不透明度" />
            </Prop>
            <Prop id="bg" label="背景颜色" bind>
              <Field $width={144} $pad={12}><TextInput id="bg" placeholder="无" /></Field>
            </Prop>
            <Prop id="image" label="背景图片" bind>
              <Field $width={122}><TextInput id="image" /></Field>
              <UploadButton aria-label="上传"><UploadIcon /></UploadButton>
            </Prop>
            <SelectProp id="valign" label="竖直对齐" value="顶部" bind />
            <SelectProp id="halign" label="水平对齐" value="靠左" bind />
            <SelectProp id="clip" label="剪切" value="否" bind />
            <Prop id="split" label="分包加载" help bind><Switch id="split" type="checkbox" /></Prop>
            <SelectProp id="nav" label="导航栏样式" value="默认" />
            <ColorProp id="navbg" label="导航栏背景颜色" value="#000000" height={40} />
            <SelectProp id="navtitle" label="导航栏标题颜色" value="白色" height={40} />
            <ColorProp id="winbg" label="窗口的背景色" value="#ffffff" />
            <SelectProp id="pull" label="下拉加载的样式" value="浅色" height={40} />
            <SelectProp id="rotate" label="是否支持屏幕旋转" value="竖屏显示" height={40} />
          </Rows>
          <PanelHeader $height={24}>
            排版设置
            <HeaderButton $right={0} aria-label="展开"><Chevron d="down" /></HeaderButton>
          </PanelHeader>
          <Rows>
            <Prop id="ptop" label="上内边距" bind>
              <Field $width={144}><TextInput id="ptop" defaultValue="0" /></Field>
            </Prop>
          </Rows>
        </Properties>

        <Canvas>
          <RulerX><Ruler /></RulerX>
          <RulerY><Ruler vertical /></RulerY>
          <Artboard><SampleButton>Button</SampleButton></Artboard>
          <GuideX />
          <GuideY />
          <Mark $x={85} $y={27} $w={506} $h={97} $line={1} />
        </Canvas>

        <ObjectPanel>
          <TreeHeader>
            <TreeTab>对象树</TreeTab>
            <SearchInput placeholder="搜索对象" aria-label="搜索对象" />
            <SearchButton aria-label="搜索"><SearchIcon /></SearchButton>
          </TreeHeader>
          <TreeBody>
            <Tree>
              {nodes.map((n) => (
                <TreeRow key={n.name} $active={n.active}>
                  <EyeSlot>{n.eye && <EyeIcon />}</EyeSlot>
                  {n.depth > 0 && (
                    <Toggle $depth={n.depth} aria-label={`展开${n.name}`}>
                      {n.open && <Svg size={8} h={6}><path d="M0 0h8L4 6z" /></Svg>}
                    </Toggle>
                  )}
                  <IconSlot>{n.icon}</IconSlot>
                  <NodeName>{n.name}</NodeName>
                </TreeRow>
              ))}
              <Mark $x={45} $y={46} $w={175} $h={57} $line={3} />
            </Tree>
            <Tools>
              <ToolButton $tone="#b5b5b5" aria-label="说明"><Svg><Bubble /></Svg></ToolButton>
              <ToolButton $tone="#707070" aria-label="说明设置"><InfoGear /></ToolButton>
              <ToolButton $tone="#4f86e8" aria-label="全部说明"><InfoStack /></ToolButton>
              <ToolButton $tone="#4f86e8"><span>F<Small>(x)</Small></span></ToolButton>
              <ToolButton $tone="#707070" aria-label="导出"><InfoDoor /></ToolButton>
              <ToolButton $tone="#707070" aria-label="交换"><SwapIcon /></ToolButton>
              <ToolButton $tone="#707070" aria-label="刷新"><InfoCycle /></ToolButton>
              <ToolButton $tone="#707070" aria-label="数据库"><SqlIcon /></ToolButton>
            </Tools>
          </TreeBody>
        </ObjectPanel>
      </Workspace>

      <HelpCenter href="#">
        <HelpText>帮助中心</HelpText>
        <ChatHelp />
      </HelpCenter>
      <Watermark>CSDN @Developer 小马</Watermark>
      <ArrowLayer width="536" height="190" viewBox="0 0 536 190">
        <path d="M2 10 21 4l-2 5.500 22 8L316 111l217 75.500-.5 1L316 115.500 41 27 15 18 13 23.500z" fill={color.mark} />
      </ArrowLayer>
    </Shell>
  );
}
